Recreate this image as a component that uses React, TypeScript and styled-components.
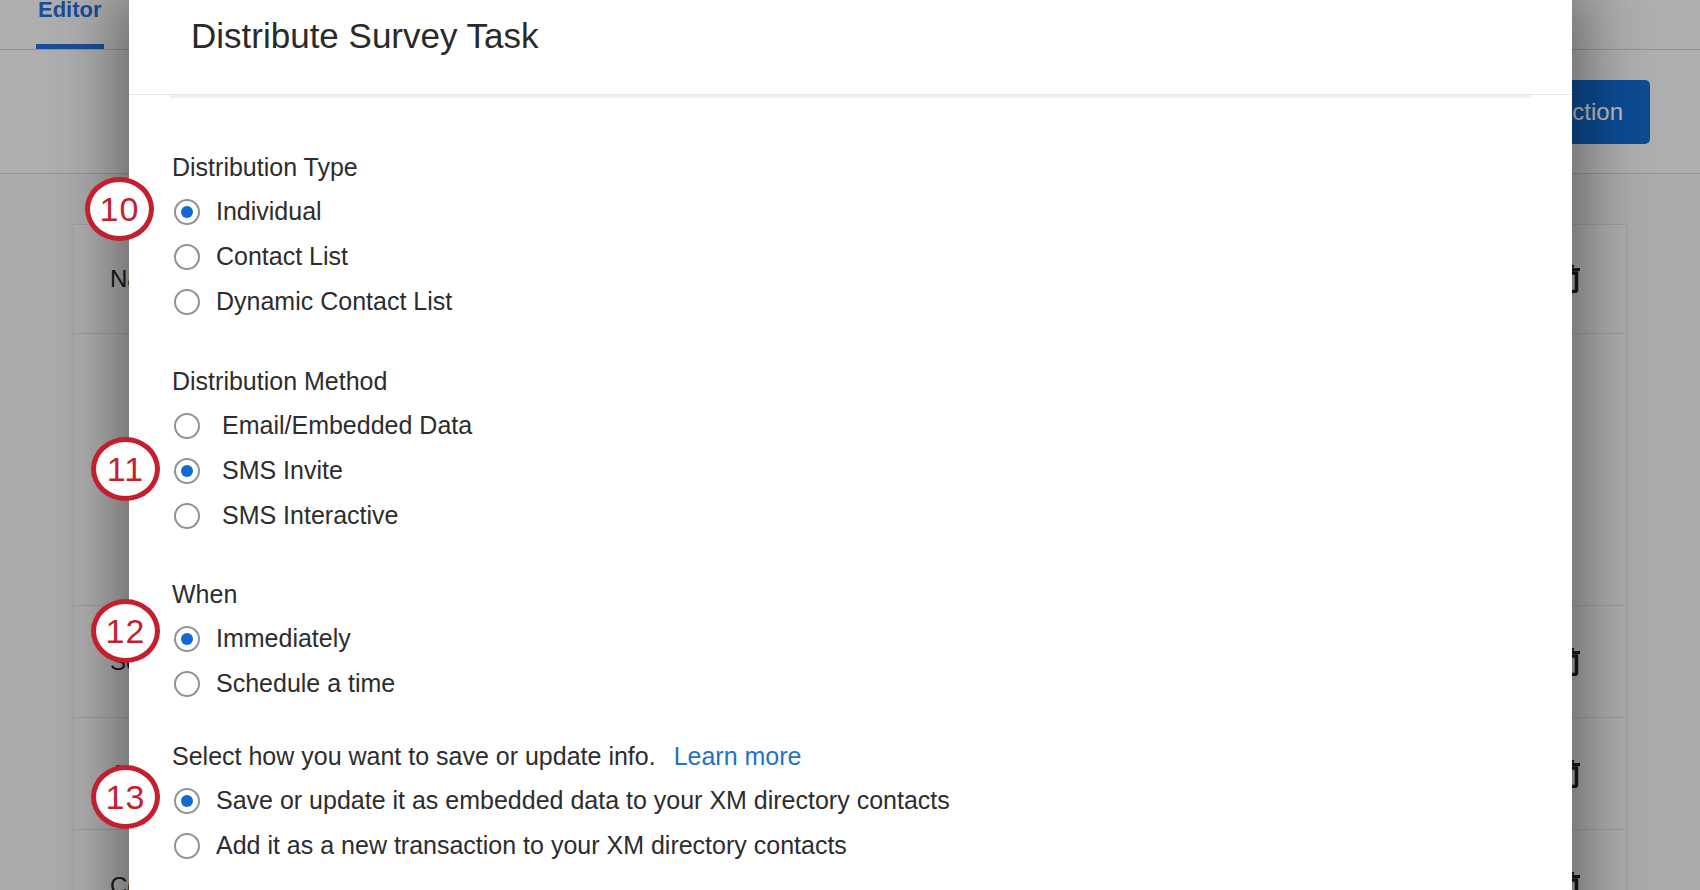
import React from "react";
import styled, { createGlobalStyle } from "styled-components";

const GlobalStyle = createGlobalStyle`
  html, body { margin: 0; padding: 0; width: 100%; height: 100%; overflow: hidden; }
  body { font-family: "Liberation Sans", Arial, sans-serif; background: #e4e4e4; }
  * { box-sizing: border-box; }
`;

const Page = styled.div`
  position: relative;
  width: 1700px;
  height: 890px;
  overflow: hidden;
  background: #e4e4e4;
  display: flex;
  flex-direction: column;
`;

const TopBar = styled.header`
  height: 50px;
  flex: none;
  border-bottom: 1px solid #c4c4c4;
  background: #e9e9e9;
  display: flex;
  padding-left: 36px;
`;

const Tab = styled.div`
  height: 49px;
  display: flex;
  align-items: flex-start;
  font-size: 22px;
  font-weight: 700;
  line-height: 20px;
  color: #2369cd;
  border-bottom: 5px solid #2369cd;
  padding: 0 2px;
`;

const Toolbar = styled.div`
  height: 124px;
  flex: none;
  border-bottom: 1px solid #c4c4c4;
  background: #e8e8e8;
  display: flex;
  align-items: center;
  justify-content: flex-end;
  padding-right: 50px;
`;

const PrimaryButton = styled.button`
  height: 64px;
  padding: 0 27px;
  border: none;
  border-radius: 5px;
  background: #1265c4;
  color: #ffffff;
  font-family: "Liberation Sans", Arial, sans-serif;
  font-size: 24px;
`;

const Card = styled.div`
  margin: 50px 0 0 73px;
  width: 1554px;
  background: #e8e8e8;
  border: 1px solid #d2d2d2;
  display: flex;
  flex-direction: column;
`;

const CardRow = styled.div<{ $h: number }>`
  height: ${(p) => p.$h}px;
  flex: none;
  border-bottom: 1px solid #d0d0d0;
  display: flex;
  align-items: center;
  justify-content: space-between;
  padding: 0 46px 0 36px;
  font-size: 24px;
  color: #232323;
`;

const Overlay = styled.div`
  position: absolute;
  inset: 0;
  background: rgba(0, 0, 0, 0.25);
`;

const Modal = styled.div`
  position: absolute;
  left: 129px;
  top: 0;
  width: 1443px;
  height: 960px;
  background: #ffffff;
  box-shadow: 0 0 60px 10px rgba(0, 0, 0, 0.45);
  display: flex;
  flex-direction: column;
`;

const ModalHeader = styled.div`
  padding: 16px 0 38px 62px;
  border-bottom: 1px solid #e6e6e6;
`;

const Title = styled.h1`
  margin: 0;
  font-size: 35px;
  line-height: 40px;
  font-weight: 400;
  color: #2a2a2a;
`;

const ModalBody = styled.div`
  padding: 0 41px;
`;

const Content = styled.div`
  border-top: 3px solid #efefef;
  padding: 47px 0 0 2px;
  display: flex;
  flex-direction: column;
`;

const Section = styled.section<{ $gap: number }>`
  margin-top: ${(p) => p.$gap}px;
  display: flex;
  flex-direction: column;
`;

const SectionLabel = styled.div`
  font-size: 25px;
  line-height: 44px;
  color: #2d2d2d;
`;

const Link = styled.a`
  color: #1f72c6;
  margin-left: 18px;
  text-decoration: none;
`;

const Option = styled.label<{ $indent: number }>`
  height: 45px;
  display: flex;
  align-items: center;
  gap: ${(p) => p.$indent}px;
  font-size: 25px;
  color: #2d2d2d;
`;

const Radio = styled.span<{ $checked: boolean }>`
  width: 26px;
  height: 26px;
  margin-left: 2px;
  flex: none;
  border-radius: 50%;
  border: 2px solid #8d939c;
  background: #fff;
  display: flex;
  align-items: center;
  justify-content: center;
  &::after {
    content: "";
    width: 12px;
    height: 12px;
    border-radius: 50%;
    background: ${(p) => (p.$checked ? "#1169d3" : "transparent")};
  }
`;

const Callout = styled.div<{ $x: number; $y: number }>`
  position: absolute;
  left: ${(p) => p.$x}px;
  top: ${(p) => p.$y}px;
  width: 69px;
  height: 64px;
  border-radius: 50%;
  border: 5px solid #c41f2f;
  background: #ffffff;
  display: flex;
  align-items: center;
  justify-content: center;
  font-size: 34px;
  color: #c41f2f;
  letter-spacing: 1px;
`;

const TrashIcon = () => (
  <svg width="20" height="28" viewBox="0 0 20 28">
    <rect x="6" y="0" width="8" height="2.5" fill="#1e1e1e" />
    <rect x="0" y="3" width="20" height="3" fill="#1e1e1e" />
    <path
      d="M3.5 8 H16.5 V25 a1.5 1.5 0 0 1 -1.5 1.5 H5 a1.5 1.5 0 0 1 -1.5 -1.5 Z"
      fill="none"
      stroke="#1e1e1e"
      strokeWidth="3.5"
    />
  </svg>
);

type Opt = { text: string; checked?: boolean };

const groups: { label: React.ReactNode; gap: number; indent: number; options: Opt[] }[] = [
  {
    label: "Distribution Type",
    gap: 0,
    indent: 16,
    options: [{ text: "Individual", checked: true }, { text: "Contact List" }, { text: "Dynamic Contact List" }],
  },
  {
    label: "Distribution Method",
    gap: 35,
    indent: 22,
    options: [{ text: "Email/Embedded Data" }, { text: "SMS Invite", checked: true }, { text: "SMS Interactive" }],
  },
  {
    label: "When",
    gap: 34,
    indent: 16,
    options: [{ text: "Immediately", checked: true }, { text: "Schedule a time" }],
  },
  {
    label: (
      <>
        Select how you want to save or update info.
        <Link href="#">Learn more</Link>
      </>
    ),
    gap: 28,
    indent: 16,
    options: [
      { text: "Save or update it as embedded data to your XM directory contacts", checked: true },
      { text: "Add it as a new transaction to your XM directory contacts" },
    ],
  },
];

const rows = [
  { h: 109, text: "Name", trash: true },
  { h: 272, text: "", trash: false },
  { h: 112, text: "Schedule", trash: true },
  { h: 112, text: "Action", trash: true },
  { h: 112, text: "Conditions", trash: true },
];

const callouts = [
  { n: "10", x: 85, y: 177 },
  { n: "11", x: 91, y: 437 },
  { n: "12", x: 91, y: 599 },
  { n: "13", x: 91, y: 765 },
];

export default function App() {
  return (
    <>
      <GlobalStyle />
      <Page>
        <TopBar>
          <Tab>Editor</Tab>
        </TopBar>
        <Toolbar>
          <PrimaryButton>Add Action</PrimaryButton>
        </Toolbar>
        <Card>
          {rows.map((r, i) => (
            <CardRow key={i} $h={r.h}>
              <span>{r.text}</span>
              {r.trash && <TrashIcon />}
            </CardRow>
          ))}
        </Card>
        <Overlay />
        <Modal>
          <ModalHeader>
            <Title>Distribute Survey Task</Title>
          </ModalHeader>
          <ModalBody>
            <Content>
              {groups.map((g, gi) => (
                <Section key={gi} $gap={g.gap}>
                  <SectionLabel>{g.label}</SectionLabel>
                  {g.options.map((o) => (
                    <Option key={o.text} $indent={g.indent}>
                      <Radio $checked={!!o.checked} />
                      {o.text}
                    </Option>
                  ))}
                </Section>
              ))}
            </Content>
          </ModalBody>
        </Modal>
        {callouts.map((c) => (
          <Callout key={c.n} $x={c.x} $y={c.y}>
            {c.n}
          </Callout>
        ))}
      </Page>
    </>
  );
}
